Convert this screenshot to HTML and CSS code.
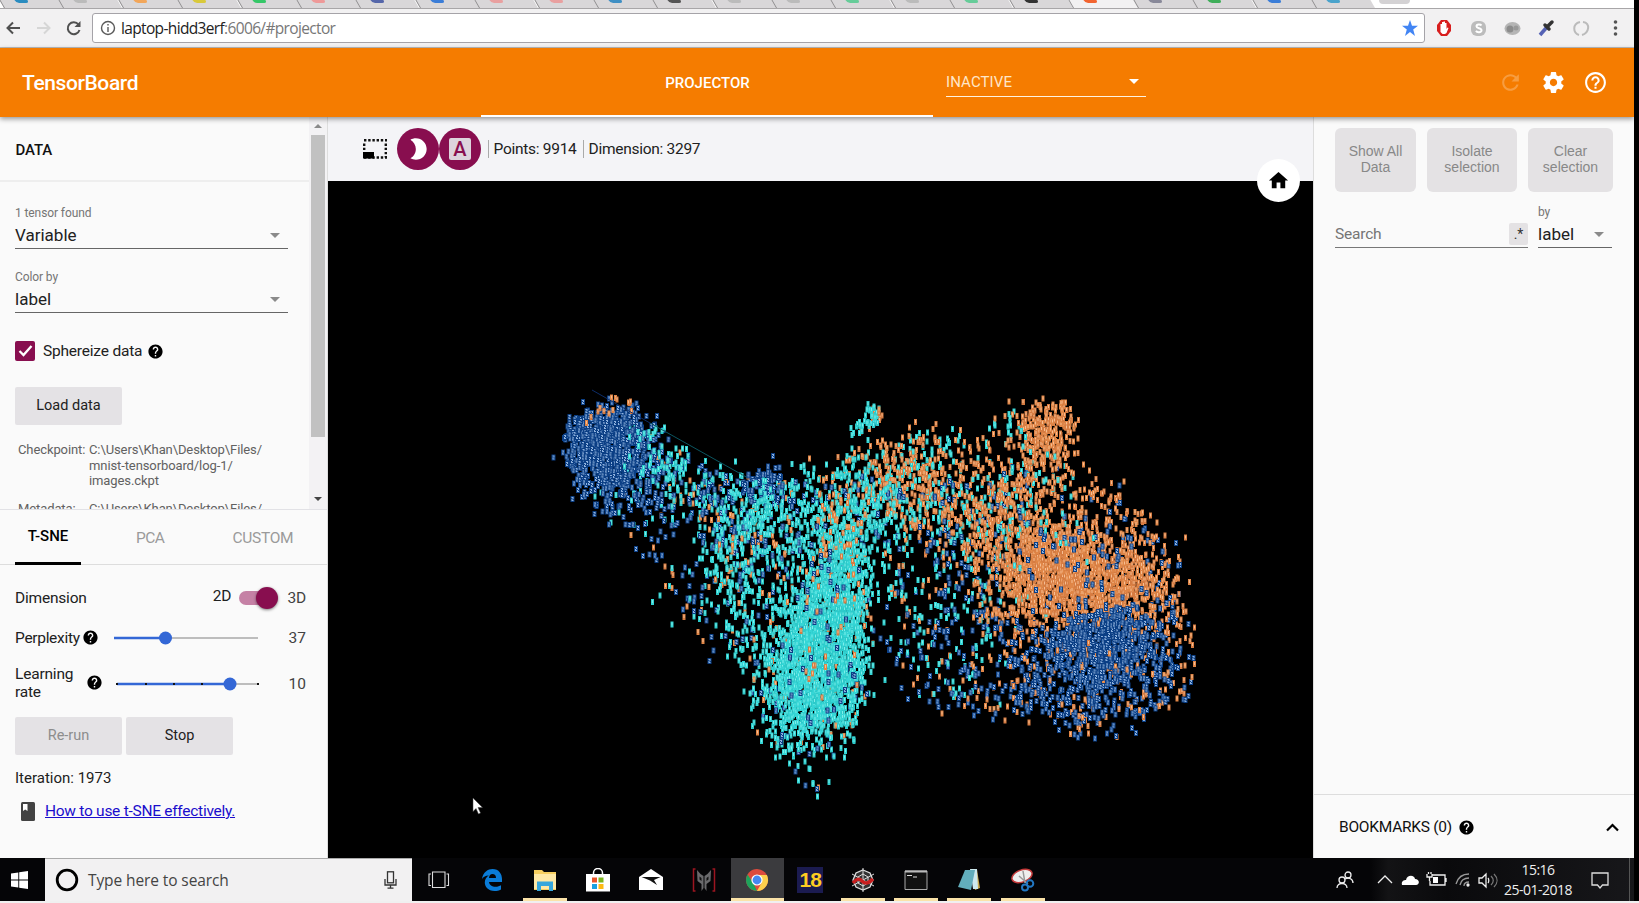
FILE: index.html
```html
<!DOCTYPE html>
<html lang="en">
<head>
<meta charset="utf-8">
<title>TensorBoard</title>
<link rel="stylesheet" href="styles.css">
</head>
<body>
<svg class="defs" width="0" height="0">
  <symbol id="help" viewBox="0 0 24 24"><path d="M12 2C6.48 2 2 6.48 2 12s4.48 10 10 10 10-4.48 10-10S17.52 2 12 2zm1 17h-2v-2h2v2zm2.070-7.750l-.9.920C13.450 12.900 13 13.500 13 15h-2v-.5c0-1.100.450-2.100 1.170-2.830l1.240-1.260c.370-.360.590-.860.590-1.410 0-1.100-.9-2-2-2s-2 .9-2 2H8c0-2.210 1.790-4 4-4s4 1.790 4 4c0 .880-.360 1.680-.930 2.250z"/></symbol>
</svg>
<div class="screen">
  <div class="tabs" id="tabs"></div>
  <div class="toolbar">
    <svg class="nav" width="84" height="20" viewBox="0 0 84 20" fill="none" stroke-width="2">
      <path d="M20 10H8M13 4.500L7.500 10l5.500 5.500" stroke="#505050"/>
      <path d="M37 10h12M44 4.500L49.500 10 44 15.500" stroke="#d6d6d6"/>
      <path d="M78.500 6.500A6 6 0 1 0 79.500 12" stroke="#505050"/><path d="M80.500 3v6h-6z" fill="#505050"/>
    </svg>
    <div class="omnibox">
      <svg width="16" height="16" viewBox="0 0 16 16" fill="none" stroke="#5a5a5a" stroke-width="1.400"><circle cx="8" cy="8" r="6.500"/><path d="M8 7v5M8 4v1.600"/></svg>
      <span class="url">laptop-hidd3erf<i>:6006/#projector</i></span>
      <svg class="star" width="16" height="16" viewBox="0 0 16 16"><path fill="#4285f4" d="M8 0l2 5.800h6l-4.800 3.700L13 16l-5-4-5 4 1.800-6.500L0 5.800h6z"/></svg>
    </div>
    <svg class="exts" width="200" height="20" viewBox="0 0 200 20">
      <path d="M7 2h6l4 5v6l-4 5H7l-4-5V7z" fill="#d81e1e"/><path d="M6.500 10V6h1.500v4V4h1.500v5V3.500h1.500V9V5h1.500v6l1-1.500 1 .5-2 5-1.500 1H8.500L6.500 14z" fill="#fff"/>
      <rect x="37" y="3" width="15" height="15" rx="6" fill="#bcbcbc"/><path d="M47.500 7.500c-1-1.500-5-1.500-5 .8s5 1.500 5 4-4.500 2.500-5.500.5" fill="none" stroke="#fff" stroke-width="2"/>
      <ellipse cx="78.500" cy="10.500" rx="8" ry="6.500" fill="#b5b5b5"/><circle cx="76" cy="11" r="3.500" fill="#8c8c8c"/><circle cx="82" cy="10" r="2.500" fill="#999"/>
      <path d="M106 17l7-8" stroke="#5562b5" stroke-width="3.500"/><path d="M111 7l4 4M114 8l4-4" stroke="#333" stroke-width="3.500" stroke-linecap="round"/>
      <path d="M146 4c-8 2-7 11-1 13M149 4c8 1 6 11-1 13" fill="none" stroke="#bbb" stroke-width="2"/>
      <g fill="#555"><circle cx="181.500" cy="4" r="1.800"/><circle cx="181.500" cy="10" r="1.800"/><circle cx="181.500" cy="16" r="1.800"/></g>
    </svg>
  </div>

  <header class="appbar">
    <div class="brand">TensorBoard</div>
    <div class="tab-projector">PROJECTOR</div>
    <div class="inactive"><span>INACTIVE</span><b class="caret"></b></div>
    <div class="actions">
      <svg class="dim" width="25" height="25" viewBox="0 0 24 24"><path d="M17.650 6.350C16.200 4.900 14.210 4 12 4c-4.420 0-7.990 3.580-7.990 8s3.570 8 7.990 8c3.730 0 6.840-2.550 7.730-6h-2.080c-.820 2.330-3.040 4-5.650 4-3.310 0-6-2.690-6-6s2.690-6 6-6c1.660 0 3.140.690 4.220 1.780L13 11h7V4l-2.350 2.350z"/></svg>
      <svg width="25" height="25" viewBox="0 0 24 24"><path d="M19.430 12.980c.040-.320.070-.640.070-.980s-.030-.660-.070-.980l2.110-1.650c.190-.150.240-.420.120-.640l-2-3.460c-.120-.220-.390-.300-.610-.220l-2.490 1c-.520-.400-1.080-.730-1.690-.980l-.380-2.650C14.460 2.180 14.250 2 14 2h-4c-.250 0-.460.180-.490.420l-.380 2.650c-.610.250-1.170.590-1.690.980l-2.490-1c-.230-.090-.490 0-.610.220l-2 3.460c-.130.220-.070.490.120.640l2.110 1.650c-.040.320-.070.650-.070.980s.030.660.070.980l-2.110 1.650c-.190.150-.240.420-.120.640l2 3.460c.120.220.390.300.610.220l2.490-1c.520.400 1.080.730 1.690.980l.380 2.650c.030.240.240.420.490.420h4c.250 0 .460-.180.490-.420l.380-2.650c.610-.250 1.170-.590 1.690-.980l2.490 1c.230.090.490 0 .610-.220l2-3.460c.120-.220.070-.490-.120-.640l-2.110-1.650zM12 15.500c-1.930 0-3.500-1.570-3.500-3.500s1.570-3.500 3.500-3.500 3.500 1.570 3.500 3.500-1.570 3.500-3.500 3.500z"/></svg>
      <svg width="25" height="25" viewBox="0 0 24 24"><path d="M11 18h2v-2h-2v2zm1-16C6.480 2 2 6.480 2 12s4.480 10 10 10 10-4.480 10-10S17.520 2 12 2zm0 18c-4.410 0-8-3.590-8-8s3.590-8 8-8 8 3.590 8 8-3.590 8-8 8zm0-14c-2.210 0-4 1.790-4 4h2c0-1.100.9-2 2-2s2 .9 2 2c0 2-3 1.750-3 5h2c0-2.250 3-2.500 3-5 0-2.210-1.790-4-4-4z"/></svg>
    </div>
  </header>

  <main>
    <aside class="left">
      <section class="data">
        <div class="data-body">
          <h2>DATA</h2>
          <div class="field"><label>1 tensor found</label><div class="select">Variable<b class="caret"></b></div></div>
          <div class="field second"><label>Color by</label><div class="select">label<b class="caret"></b></div></div>
          <div class="check">
            <svg width="20" height="20" viewBox="0 0 20 20"><rect width="20" height="20" rx="2" fill="#880e4f"/><path d="M4.500 10l4 4 8-9" fill="none" stroke="#fff" stroke-width="2.300"/></svg>
            <span>Sphereize data</span><svg class="q" width="17" height="17"><use href="#help"/></svg>
          </div>
          <div class="btn load">Load data</div>
          <dl>
            <dt>Checkpoint:</dt><dd>C:\Users\Khan\Desktop\Files/<br>mnist-tensorboard/log-1/<br>images.ckpt</dd>
            <dt>Metadata:</dt><dd>C:\Users\Khan\Desktop\Files/</dd>
          </dl>
        </div>
        <div class="scroll"><b class="up"></b><div class="thumb"></div><b class="down"></b></div>
      </section>
      <section class="proj">
        <nav><span class="on">T-SNE</span><span class="pca">PCA</span><span class="custom">CUSTOM</span></nav>
        <div class="row dim-row"><span>Dimension</span><span class="two">2D</span><span class="toggle"><b></b></span><span class="val">3D</span></div>
        <div class="row perp"><span>Perplexity</span><svg class="q" width="17" height="17"><use href="#help"/></svg>
          <svg class="slider s1" width="144" height="14" viewBox="0 0 144 14"><path d="M0 7h144" stroke="#bdbdbd" stroke-width="2"/><path d="M0 7h52" stroke="#3367d6" stroke-width="2.400"/><circle cx="51.500" cy="7" r="6.500" fill="#3367d6"/></svg>
          <span class="val">37</span></div>
        <div class="row learn"><span>Learning<br>rate</span><svg class="q" width="17" height="17"><use href="#help"/></svg>
          <svg class="slider s2" width="144" height="14" viewBox="0 0 144 14"><path d="M1 7h142" stroke="#bdbdbd" stroke-width="2"/><path d="M1 7h114" stroke="#3367d6" stroke-width="2.400"/><g fill="#111"><path d="M0 6h2v2H0zM29 6h2v2h-2zM57 6h2v2h-2zM85 6h2v2h-2zM141 6h2v2h-2z"/></g><circle cx="114" cy="7" r="6.500" fill="#3367d6"/></svg>
          <span class="val">10</span></div>
        <div class="buttons"><div class="btn off">Re-run</div><div class="btn">Stop</div></div>
        <div class="iter">Iteration: 1973</div>
        <div class="howto"><svg width="14" height="19" viewBox="0 0 14 19"><rect width="14" height="19" rx="1.500" fill="#424242"/><path d="M2 2h4.500v7L4.200 7.500 2 9z" fill="#fff"/></svg><a>How to use t-SNE effectively.</a></div>
      </section>
    </aside>

    <section class="center">
      <div class="plotbar">
        <svg width="24" height="20" viewBox="0 0 24 20"><path d="M1 1.300h23M1 18.500h23" stroke="#111" stroke-width="2.400" stroke-dasharray="2.400 1.800"/><path d="M1.200 4.500v14M22.800 4.500v14" stroke="#111" stroke-width="2.400" stroke-dasharray="2.400 1.800"/><path d="M0 13h11v6.500H0z" fill="#000"/></svg>
        <span class="round"><svg width="26" height="26" viewBox="0 0 24 24"><path fill="#fff" d="M10 2c-1.820 0-3.530.5-5 1.350C7.990 5.080 10 8.300 10 12s-2.010 6.920-5 8.650C6.470 21.500 8.180 22 10 22c5.520 0 10-4.480 10-10S15.520 2 10 2z"/></svg></span>
        <span class="round"><b class="letter">A</b></span>
        <span class="stat">Points: 9914</span><span class="stat dimn">Dimension: 3297</span>
      </div>
      <canvas id="plot" width="985" height="677"></canvas>
      <div class="home"><svg width="23" height="23" viewBox="0 0 24 24"><path d="M10 20v-6h4v6h5v-8h3L12 3 2 12h3v8z"/></svg></div>
      <svg class="cursor" width="11" height="17" viewBox="0 0 11 17"><path d="M1 0v13.500l3-3 2.500 5.500 2-1L6 9.500h4.500z" fill="#fff" stroke="#444" stroke-width=".5"/></svg>
    </section>

    <aside class="right">
      <div class="trio"><div>Show All<br>Data</div><div>Isolate<br>selection</div><div>Clear<br>selection</div></div>
      <div class="search">
        <div class="query"><span>Search</span><em>.*</em></div>
        <div class="by"><label>by</label><div class="select">label<b class="caret"></b></div></div>
      </div>
      <div class="bookmarks"><span>BOOKMARKS (0)</span><svg class="q" width="17" height="17"><use href="#help"/></svg>
        <svg class="chev" width="13" height="9" viewBox="0 0 13 9"><path d="M1 7.500L6.500 2 12 7.500" fill="none" stroke="#000" stroke-width="2.200"/></svg></div>
    </aside>
  </main>

  <footer class="taskbar">
    <div class="start"><svg width="17" height="18" viewBox="0 0 17 18"><path fill="#fff" d="M0 2.500l7.300-1v7H0zM8.200 1.300L17 0v8.500H8.200zM0 9.500h7.300v7l-7.300-1zM8.200 9.500H17V18l-8.800-1.300z"/></svg></div>
    <div class="find">
      <svg width="24" height="24" viewBox="0 0 24 24"><circle cx="12" cy="12" r="9.800" fill="none" stroke="#000" stroke-width="2.800"/></svg>
      <span>Type here to search</span>
      <svg class="mic" width="13" height="18" viewBox="0 0 13 18" fill="none" stroke="#333" stroke-width="1.300"><rect x="3.500" y=".8" width="6" height="11"/><path d="M1 8v6h11V8M6.500 14v3.500M3.500 17.200h6"/></svg>
    </div>
    <div class="apps">
      <div><svg viewBox="0 0 24 24" fill="none" stroke="#ddd" stroke-width="1.100"><path d="M5.500 4h12.500v15.500H5.500zM4 6H2v11.500h2M19.500 6h2v11.500h-2"/></svg></div>
      <div><svg viewBox="0 0 24 24"><path fill="#0a7cd8" d="M2 11C3 4 8 1 12.500 1 19 1 22 6 22 11v3H9c.3 3 3 4.800 6.500 4.800 2.300 0 4-.6 5.500-1.500v4.200c-2 1-4 1.500-6.500 1.500C8 23 4.800 18.500 4.800 14.500c0-3 1.500-5.500 4-7C5.500 7.500 3.500 9 2 11zm7-1h7c0-2.700-1.300-4-3.500-4S9.300 7.500 9 10z"/></svg></div>
      <div class="run"><svg viewBox="0 0 24 24"><path fill="#f7cf60" d="M1 2h8l2 2h12v18H1z"/><path fill="#ffe9a6" d="M1 6h22v15H1z"/><path fill="#37a7dc" d="M4 13.500h16V23h-4v-5H8v5H4z"/></svg></div>
      <div><svg viewBox="0 0 24 24"><path d="M7.500 8V5a4.500 4.500 0 0 1 9 0v3" fill="none" stroke="#fff" stroke-width="1.500"/><path fill="#fff" d="M0 6h24v17.500H0z"/><path fill="#e8552b" d="M6 9.500h5v5H6z"/><path fill="#7ab51d" d="M12.500 9.500h5v5h-5z"/><path fill="#18a0e0" d="M6 16h5v5H6z"/><path fill="#fdb913" d="M12.500 16h5v5h-5z"/></svg></div>
      <div><svg viewBox="0 0 24 24"><path fill="#fff" d="M0 9l12-8 12 8v13H0z"/><path d="M2.500 9h19L15 12l3 5-7-4.500z" fill="#111"/></svg></div>
      <div><svg viewBox="0 0 24 24"><path d="M3.500 1H1.500v22h2M20.500 1h2v22h-2" fill="none" stroke="#9c1520" stroke-width="1.500"/><path d="M5 2l3.500 4 3 2v12l-2 3v-7L5.500 13zM19 2l-3.500 4-3 2v12l2 3v-7l4-3z" fill="#6a6a6c"/><path d="M7.500 8.500l2 1.500v3l-2-1.500zM16.500 8.500l-2 1.500v3l2-1.500z" fill="#111"/></svg></div>
      <div class="run active"><svg viewBox="0 0 24 24"><circle cx="12" cy="12" r="11" fill="#dd4b3e"/><path d="M2.500 6.500l6 9L12 23A11 11 0 0 1 2.500 6.500z" fill="#1da35b"/><path d="M12 7h9.900A11 11 0 0 1 12 23l4.500-8z" fill="#fdd04c"/><circle cx="12" cy="12" r="5.600" fill="#fff"/><circle cx="12" cy="12" r="4.400" fill="#4688f1"/></svg></div>
      <div><b class="eighteen">18</b></div>
      <div class="run"><svg viewBox="0 0 24 24" fill="none"><path fill="#333" stroke="#ddd" stroke-width="1.300" d="M12 2l7 3 3 7-3 7-7 3-7-3-3-7 3-7z"/><path d="M12 0v24M1 6l22 12M1 18L23 6M12 6l5 3v6l-5 3-5-3V9z" stroke="#ddd"/><path d="M2 15c3-4 6-5 9-2s6 3 11-2" stroke="#c81e1e" stroke-width="3.500"/></svg></div>
      <div class="run"><svg viewBox="0 0 24 24"><path fill="#111" stroke="#aaa" d="M1 3h22v18.500H1z"/><path fill="#bbb" d="M1 2.500h22v2H1z"/><path d="M3 7.500h5M9 9h4" stroke="#ddd"/></svg></div>
      <div class="run"><svg viewBox="0 0 24 24"><path fill="#c9a94c" d="M14 2h6l3 18-5 2z"/><path fill="#cde9ee" d="M13 1h7l1 20h-5z"/><path fill="#62aebc" d="M8 2h10l-4 20-13-3z"/></svg></div>
      <div class="run"><svg viewBox="0 0 24 24"><ellipse cx="11" cy="8" rx="10.500" ry="6" transform="rotate(-20 11 8)" fill="#eee" stroke="#c43a3a" stroke-width="1.500"/><path d="M8 8l9 8M12 3l2 12" stroke="#999" stroke-width="1.500"/><g fill="none" stroke="#2277c2" stroke-width="2"><circle cx="19" cy="15.500" r="3.300"/><circle cx="14" cy="19.500" r="3"/></g></svg></div>
    </div>
    <div class="tray">
      <svg width="170" height="24" viewBox="0 0 170 24" fill="none" stroke="#eee" stroke-width="1.300">
        <circle cx="18" cy="7" r="3"/><circle cx="12" cy="12" r="3"/><path d="M7 20c0-6 10-6 10 0M15 11c4-2 8 0 8 4" />
        <path d="M48 15l7-7 7 7"/>
        <path fill="#fff" stroke="none" d="M72 17c-1-4 2-5 4-5 1-6 9-5 9-1 5 0 5 6 1 6z"/>
        <path d="M102 7h13v10h-15v-4M116 10v4M97 6v3h5V6M98.500 6V4M101 6V4M99.500 9v4"/><path fill="#fff" stroke="none" d="M103 9h5v6h-5z"/>
        <path stroke="#999" d="M126 16C128 9 133 6 139 6M130 17c1-5 5-7 9-7M134 18c0-3 2-4 5-4"/><circle cx="138" cy="17" r="1" fill="#fff"/>
        <path d="M149 10h3l4-4v13l-4-4h-3zM158 10c1 1 1 4 0 5"/><path stroke="#777" d="M161 8c3 3 3 6 0 9M164 6c4 4 4 9 0 13"/>
      </svg>
      <div class="clock">15:16<br>25-01-2018</div>
      <svg class="note" width="18" height="18" viewBox="0 0 18 18" fill="none" stroke="#ddd" stroke-width="1.300"><path d="M1 1h16v12h-5.500L9 16l-2.500-3H1z"/></svg>
      <i></i>
    </div>
  </footer>
</div>
<script src="plot.js"></script>
</body>
</html>
```
FILE: styles.css
```css
* { box-sizing: border-box; }
body { margin: 0; width: 1639px; height: 903px; overflow: hidden; background: #000; border-bottom: 2px solid #f0f0f0; font-family: Roboto, "Noto Sans", sans-serif; font-size: 15px; color: #212121; }
.defs { display: block; position: absolute; }
svg { display: block; flex: none; }
.screen { width: 1634px; height: 901px; display: flex; flex-direction: column; background: #fafafa; overflow: hidden; }
.caret { border: 5px solid transparent; border-top-color: #8a8a8a; border-bottom: 0; }

.tabs { height: 9px; flex: none; background: #fff; border-bottom: 1px solid #a8a6a8; display: flex; overflow: hidden; padding-left: 10px; }
.tab { width: 59.400px; height: 9px; flex: none; background: #d9d7d9; border-left: 1px solid #8e8c8e; transform: skewX(30deg); padding-left: 14px; }
.tab:first-child { margin-left: -8px; }
.tab.current { width: 65px; background: #f2f1f2; }
.tab b { display: block; width: 13px; height: 3px; border-radius: 0 0 3px 3px; }
.tab-new { width: 31px; height: 4px; background: #d4d2d4; margin-left: 5px; border-radius: 0 0 4px 4px; }
.toolbar { height: 39px; flex: none; display: flex; align-items: center; background: #f2f1f2; border-bottom: 1px solid #bbb; }
.nav { margin-right: 8px; }
.omnibox { width: 1333px; height: 30px; border: 1px solid #a5a3a8; border-radius: 3px; background: #fff; display: flex; align-items: center; padding: 0 6px 0 7px; }
.url { margin-left: 5px; font: 15.500px/20px "Open Sans", "Noto Sans", sans-serif; letter-spacing: -.65px; color: #222; }
.url i { font-style: normal; color: #777; }
.star { margin-left: auto; }
.exts { margin-left: 9px; }

.appbar { height: 69px; flex: none; background: #f57c00; color: #fff; display: flex; z-index: 2; box-shadow: 0 2px 5px rgba(0,0,0,.4); }
.brand { width: 481px; padding-left: 22px; font-size: 21px; font-weight: 500; line-height: 70px; letter-spacing: -.4px; }
.tab-projector { width: 452px; border-bottom: 2px solid #fff; text-align: center; font-weight: 500; line-height: 70px; padding-left: 1px; }
.inactive { width: 200px; height: 30px; margin: 19px 0 0 13px; border-bottom: 1px solid #fff3e0; display: flex; align-items: center; justify-content: space-between; padding-right: 7px; color: #ffe6c8; letter-spacing: .1px; }
.inactive .caret { border-top-color: #fff; }
.actions { margin: 22px 26px 0 auto; display: flex; gap: 17.500px; fill: #fff; }
.dim { opacity: .25; }

main { height: 741px; flex: none; display: flex; }
.left { width: 328px; border-right: 1px solid #ddd; display: flex; flex-direction: column; background: #fafafa; }
.data { height: 393px; display: flex; border-bottom: 1px solid #e2e2e6; overflow: hidden; }
.data-body { width: 309px; height: 392px; overflow: hidden; }
h2 { margin: 0; height: 65px; border-bottom: 2px solid #eee; padding-left: 15.500px; font-size: 15px; font-weight: 500; line-height: 66px; color: #111; letter-spacing: -.1px; }
.field { margin: 23px 0 0 15px; width: 273px; }
.field.second { margin-top: 20px; }
label { display: block; font-size: 12px; line-height: 16px; color: #757575; letter-spacing: -.1px; }
.select { height: 27px; border-bottom: 1px solid #666; font-size: 17px; line-height: 27px; padding-top: 2px; display: flex; align-items: center; justify-content: space-between; padding-right: 8px; }
.field label + .select { height: 28px; }
.check { display: flex; align-items: center; margin: 27px 0 0 15px; height: 22px; font-size: 15.500px; letter-spacing: -.2px; }
.check span { margin-left: 8px; }
.q { margin-left: 5px; }
.btn { width: 107px; height: 38px; background: #e4e2e5; border-radius: 2px; text-align: center; line-height: 38px; font-size: 14.500px; }
.btn.off { color: #8d8d8d; }
.load { margin: 25px 0 0 15px; }
dl { margin: 17px 0 0 18px; display: grid; grid-template-columns: 71px 1fr; row-gap: 12px; font-size: 13px; line-height: 15.600px; color: #616161; letter-spacing: -.1px; }
dd { margin: 0; }
.scroll { width: 18px; background: #f3f2f4; display: flex; flex-direction: column; align-items: center; }
.up { margin-top: 7px; border: 4px solid transparent; border-bottom-color: #8a8a8a; border-top: 0; }
.thumb { width: 14px; height: 302px; background: #c1c1c1; margin-top: 7px; }
.down { margin-top: 60px; border: 4px solid transparent; border-top-color: #444; border-bottom: 0; }

.proj nav { height: 55px; border-bottom: 1px solid #ddd; display: flex; line-height: 56px; color: #9a9a9a; font-size: 15.500px; }
.proj nav .on { width: 66px; height: 55px; margin-left: 15px; text-align: center; font-weight: 500; font-size: 15px; color: #000; line-height: 53px; border-bottom: 3px solid #000; }
.proj nav .pca { margin-left: 55px; letter-spacing: -.5px; }
.proj nav .custom { margin-left: 68px; letter-spacing: -.3px; }
.row { display: flex; align-items: center; padding: 0 21px 0 15px; font-size: 15.500px; }
.row .val { margin-left: auto; color: #424242; }
.dim-row { height: 38px; margin-top: 14px; letter-spacing: -.2px; }
.dim-row .two { margin: -5px 8px 0 126px; }
.toggle { width: 36px; height: 14px; border-radius: 7px; background: #c581a5; }
.toggle b { display: block; width: 22px; height: 22px; margin: -4px 0 0 17px; border-radius: 50%; background: #880e4f; box-shadow: 0 1px 3px rgba(0,0,0,.5); }
.perp { height: 30px; margin-top: 6px; }
.perp > span:first-child { width: 66px; letter-spacing: -.3px; }
.perp .q { margin: -2px 0 0 1px; }
.slider.s1 { margin-left: 15px; }
.learn { height: 44px; margin-top: 9px; line-height: 17.600px; }
.learn > span:first-child { width: 66px; letter-spacing: -.2px; }
.learn .q { margin-top: -3px; }
.learn .val { padding-top: 1px; }
.slider.s2 { margin-left: 13px; }
.buttons { display: flex; gap: 4px; margin: 11px 0 0 15px; }
.iter { margin: 13px 0 0 15px; line-height: 20px; }
.howto { margin: 13px 0 0 21px; display: flex; align-items: center; gap: 10px; font-size: 15.500px; line-height: 20px; letter-spacing: -.27px; }
.howto a { color: #1a0dcc; text-decoration: underline; }

.center { width: 985px; position: relative; background: #000; }
.plotbar { height: 64px; background: #f4f4f7; display: flex; align-items: center; padding-left: 35px; }
.plotbar > svg { margin-right: 9.500px; }
.round { width: 42px; height: 42px; border-radius: 50%; background: #880e4f; display: grid; place-items: center; margin-right: .5px; }
.letter { width: 22px; height: 22px; border-radius: 2px; background: #ddd3dc; color: #880e4f; font-size: 20px; line-height: 22px; text-align: center; font-weight: 500; }
.stat { border-left: 1px solid #aaa; padding-left: 5px; line-height: 18px; margin-left: 6px; font-size: 15.500px; letter-spacing: -.28px; }
.stat.dimn { margin-left: 6px; }
#plot { display: block; }
.home { position: absolute; left: 929px; top: 42px; width: 43px; height: 43px; border-radius: 50%; background: #fff; display: grid; place-items: center; }
.cursor { position: absolute; left: 144px; top: 681px; }

.right { width: 321px; border-left: 1px solid #ddd; background: #fafafa; display: flex; flex-direction: column; }
.trio { display: flex; margin: 11px 0 0 21px; }
.trio div { width: 81px; height: 64px; border-radius: 6px; background: #e4e2e4; margin-right: 11px; padding-top: 15px; text-align: center; font: 14px/16px "Liberation Sans", Arial, sans-serif; color: #888; }
.trio div:nth-child(2) { width: 90px; }
.trio div:nth-child(3) { width: 85px; margin-right: 0; }
.search { display: flex; align-items: flex-end; margin: 13px 0 0 21px; gap: 10px; }
.query { width: 193px; height: 27px; border-bottom: 1px solid #777; display: flex; justify-content: space-between; align-items: center; color: #757575; font-size: 15.500px; letter-spacing: -.2px; }
.query em { width: 19px; height: 22px; background: #e4e2e4; border-radius: 2px; font-style: normal; text-align: center; line-height: 23px; color: #333; font-size: 14px; margin-top: -1px; }
.by { width: 74px; }
.by label { margin-top: -1px; }
.by .select { padding-top: 1px; height: 28px; }
.bookmarks { margin-top: auto; height: 64px; border-top: 1px solid #ddd; display: flex; align-items: center; padding: 1px 15px 0 25px; font-size: 15.500px; letter-spacing: -.25px; color: #111; }
.bookmarks .q { margin-left: 6px; }
.chev { margin-left: auto; }

.taskbar { height: 43px; flex: none; background: #050507; display: flex; color: #eee; }
.start { width: 45px; display: grid; place-items: center; padding-right: 6px; }
.find { width: 367px; background: #f2f1f2; border-top: 1px solid #aaa; display: flex; align-items: center; padding: 0 15px 0 10px; color: #444; }
.find span { margin-left: 9px; font: 15.500px "Open Sans", "Noto Sans", sans-serif; letter-spacing: -.1px; }
.mic { margin-left: auto; }
.apps { display: flex; }
.apps > div { width: 53.100px; height: 43px; display: grid; place-items: center; }
.apps svg { width: 24px; height: 24px; }
.run { background: linear-gradient(#fbe3a8, #fbe3a8) center bottom / 44px 3px no-repeat; }
.run.active { background: linear-gradient(#fbe3a8, #fbe3a8) center bottom / 53px 3px no-repeat #3b3b3e; }
.eighteen { width: 26px; height: 26px; background: #1b1b50; color: #fc2; font: bold 21px/26px "Liberation Sans", Arial, sans-serif; text-align: center; letter-spacing: -1px; }
.tray { flex: 1; display: flex; align-items: center; justify-content: flex-end; background: linear-gradient(90deg, #050507, #050507 55%, #131315 58%, #0a0a0c 68%, #17171a); }
.tray > svg:first-child { margin-right: -12px; }
.clock { width: 100px; text-align: center; font: 14px/19.500px "Open Sans", "Noto Sans", sans-serif; letter-spacing: -.5px; }
.note { margin: 2px 20px 0 3px; }
.tray i { width: 1px; height: 43px; background: #555; margin-right: 4px; }
```
FILE: plot.js
```javascript
// Tab strip: one favicon colour per open tab.
const favicons = ['#2a8cc0', '#bbb', '#f2a65a', '#d9c93b', '#35c768', '#e99', '#5566aa', '#3b7dd8', '#e9a0a0', '#e9a0a0',
  '#3f8fc4', '#555', '#bbb', '#bbb', '#6c9', '#bbb', '#6c9', '#333', '#f26430', '#889', '#3fae5a', '#3b7dd8', '#4aa3cc'];
const strip = document.getElementById('tabs');
favicons.forEach((color, i) => {
  const tab = document.createElement('div');
  tab.className = i === 18 ? 'tab current' : 'tab';
  const icon = document.createElement('b');
  icon.style.background = color;
  tab.append(icon);
  strip.append(tab);
});
const add = document.createElement('div');
add.className = 'tab-new';
strip.append(add);

// Point cloud. Coordinates are window pixels, shifted to the canvas origin.
const ctx = document.getElementById('plot').getContext('2d');
ctx.fillStyle = '#000';
ctx.fillRect(0, 0, 985, 677);
ctx.translate(-328, -181);

let seed = 1973;
const rnd = () => {
  seed = (seed + 0x6d2b79f5) | 0;
  let t = Math.imul(seed ^ (seed >>> 15), 1 | seed);
  t = (t + Math.imul(t ^ (t >>> 7), 61 | t)) ^ t;
  return ((t ^ (t >>> 14)) >>> 0) / 4294967296;
};
const gauss = () => Math.sqrt(-2 * Math.log(rnd() + 1e-9)) * Math.cos(2 * Math.PI * rnd());

const glyph = {
  o(x, y) {
    ctx.fillStyle = rnd() < .5 ? '#e08647' : '#d67c42';
    ctx.fillRect(x, y, 3, 6);
    ctx.fillStyle = '#f6bd92';
    ctx.fillRect(x + 1, y + 1, 1, 3);
  },
  c(x, y) {
    ctx.fillStyle = rnd() < .5 ? '#35d6d6' : '#2ccaca';
    ctx.fillRect(x, y, 3, 6);
    ctx.fillStyle = '#7deeea';
    ctx.fillRect(x + 1, y + 1, 1, 3);
  },
  b(x, y) {
    ctx.fillStyle = '#0b3f85';
    ctx.fillRect(x, y, 4, 6);
    ctx.fillStyle = '#8fb2de';
    ctx.fillRect(x + 1, y + 1, 2, 1);
    ctx.fillRect(x + 2, y + 2, 1, 1);
    ctx.fillRect(x + 1, y + 3, 1, 1);
    ctx.fillRect(x + 1, y + 4, 2, 1);
  }
};
// mix is a string such as "ccob": each point takes one letter of it.
const put = (x, y, mix) => glyph[mix[Math.floor(rnd() * mix.length)]](Math.round(x * 2) / 2, Math.round(y * 2) / 2);

const inside = (p, x, y) => {
  let hit = false;
  for (let i = 0, j = p.length - 1; i < p.length; j = i++) {
    const [a, b] = p[i], [c, d] = p[j];
    if ((b > y) !== (d > y) && x < (c - a) * (y - b) / (d - b) + a) hit = !hit;
  }
  return hit;
};
const fill = (n, mix, p, soft = 5) => {
  const xs = p.map(v => v[0]), ys = p.map(v => v[1]);
  const x0 = Math.min(...xs), x1 = Math.max(...xs), y0 = Math.min(...ys), y1 = Math.max(...ys);
  while (n > 0) {
    const x = x0 + rnd() * (x1 - x0), y = y0 + rnd() * (y1 - y0);
    if (inside(p, x, y)) { put(x + gauss() * soft, y + gauss() * soft, mix); n--; }
  }
};
const blob = (n, mix, cx, cy, sx, sy, limit = 2.2) => {
  while (n > 0) {
    const u = gauss(), v = gauss();
    if (u * u + v * v < limit * limit) { put(cx + u * sx, cy + v * sy, mix); n--; }
  }
};

const line = (x0, y0, x1, y1, color) => {
  ctx.strokeStyle = color;
  ctx.beginPath(); ctx.moveTo(x0, y0); ctx.lineTo(x1, y1); ctx.stroke();
};

// Left blue lobe and the bridge to the column.
fill(150, 'bbbccbo', [[640, 425], [680, 450], [730, 475], [730, 510], [690, 520], [650, 510], [610, 500]], 8);
fill(65, 'bbbc', [[570, 480], [640, 490], [690, 520], [650, 535], [600, 510]], 8);
fill(330, 'bcccco'.repeat(2) + 'bb', [[660, 455], [740, 472], [800, 480], [790, 540], [725, 600], [700, 550], [685, 500]], 9);
fill(50, 'bbco', [[630, 535], [690, 560], [725, 650], [700, 650], [660, 590]], 9);
blob(560, 'b', 604, 442, 25, 25, 1.75);
fill(330, 'bbbbbbb', [[575, 408], [635, 405], [660, 440], [655, 480], [610, 500], [570, 485], [565, 440]], 7);
fill(55, 'c', [[643, 410], [650, 415], [678, 460], [680, 505], [650, 475]], 7);
fill(14, 'o', [[610, 393], [640, 392], [645, 400], [620, 402], [585, 418], [575, 425]], 4);
fill(4, 'c', [[600, 430], [650, 440], [610, 480]], 5);
line(592, 390, 650, 423, '#0c2c68');
line(650, 423, 748, 478, '#0b5560');

// Arch between the column and the right lobe.
fill(480, 'oooocc', [[815, 468], [860, 448], [920, 432], [1010, 448], [1030, 510], [985, 540], [900, 530], [840, 500]], 9);
fill(210, 'oooc', [[850, 448], [930, 440], [950, 490], [910, 515], [860, 490]], 8);
fill(80, 'ccccb', [[840, 475], [900, 480], [920, 500], [900, 535], [850, 520]], 7);
fill(200, 'oocb', [[930, 480], [1010, 480], [1020, 570], [980, 600], [940, 560]], 10);
fill(290, 'bbcco', [[885, 530], [940, 530], [1000, 600], [1000, 680], [960, 700], [890, 660], [880, 600]], 10);
fill(55, 'bbbo', [[905, 680], [980, 660], [1050, 715], [1000, 720], [905, 705]], 7);
fill(20, 'ooc', [[920, 425], [1000, 400], [1020, 430], [950, 450]], 8);

// Cyan column.
fill(1050, 'ccccccccccob', [[790, 470], [850, 465], [898, 485], [895, 520], [882, 570], [868, 620], [863, 700], [850, 725], [820, 740], [780, 745], [756, 720], [738, 670], [714, 610], [708, 550], [722, 500], [755, 490]], 8);
fill(600, 'ccccccccco', [[810, 500], [882, 500], [875, 540], [866, 590], [862, 690], [845, 725], [780, 738], [758, 700], [766, 630], [788, 560]], 7);
fill(1350, 'c', [[838, 540], [858, 555], [856, 620], [856, 680], [842, 715], [800, 727], [778, 705], [782, 650], [796, 600], [820, 570]], 7);
fill(80, 'ooc', [[825, 495], [850, 490], [850, 565], [820, 560]], 6);
fill(55, 'b', [[800, 530], [860, 540], [862, 700], [800, 735], [770, 700], [780, 610]], 7);
fill(26, 'o', [[800, 560], [860, 560], [860, 690], [790, 690]], 6);
fill(55, 'ccccb', [[760, 735], [850, 728], [840, 762], [805, 780], [780, 765]], 7);
fill(6, 'ccob', [[795, 770], [825, 765], [822, 790], [805, 790]], 4);
blob(80, 'b', 763, 482, 11, 10);
blob(55, 'c', 763, 503, 12, 12);
fill(36, 'ccccco', [[862, 408], [876, 404], [880, 418], [866, 422]], 3);
fill(14, 'c', [[850, 422], [866, 420], [862, 431], [852, 431]], 2.5);

// Right lobe.
fill(130, 'ooob', [[1100, 480], [1130, 495], [1170, 535], [1188, 590], [1190, 680], [1165, 715], [1150, 650], [1150, 560]], 7);
fill(720, 'oooooooooob', [[1010, 460], [1060, 470], [1110, 490], [1150, 530], [1175, 590], [1160, 640], [1100, 625], [1030, 640], [985, 610], [975, 540]], 9);
fill(230, 'oooooooc', [[970, 510], [1040, 480], [1060, 600], [1020, 625], [980, 600]], 12);
fill(1100, 'o', [[1010, 540], [1045, 530], [1095, 545], [1140, 560], [1155, 600], [1110, 608], [1060, 605], [1015, 592]], 11);
fill(150, 'bbo', [[990, 620], [1050, 620], [1050, 700], [1010, 705]], 9);
fill(300, 'bbbbo', [[1030, 640], [1160, 610], [1180, 670], [1140, 710], [1080, 722], [1030, 700]], 10);
fill(640, 'bbbbbbbbbbbbbbbbbbo', [[1050, 640], [1085, 612], [1125, 610], [1150, 640], [1142, 668], [1110, 682], [1065, 672]], 10);
fill(80, 'bbbbo', [[1040, 705], [1150, 690], [1150, 712], [1105, 738], [1060, 730]], 7);
fill(60, 'b', [[1010, 500], [1140, 530], [1150, 610], [1010, 600]], 8);
fill(26, 'c', [[1000, 460], [1060, 470], [1110, 550], [1010, 590]], 8);
fill(250, 'o', [[1024, 402], [1062, 404], [1073, 425], [1060, 462], [1025, 450], [1017, 430]], 5);
fill(60, 'oooc', [[1015, 440], [1070, 450], [1070, 485], [1010, 485]], 7);
fill(15, 'cco', [[1005, 410], [1025, 402], [1020, 470], [1005, 460]], 4);
```
